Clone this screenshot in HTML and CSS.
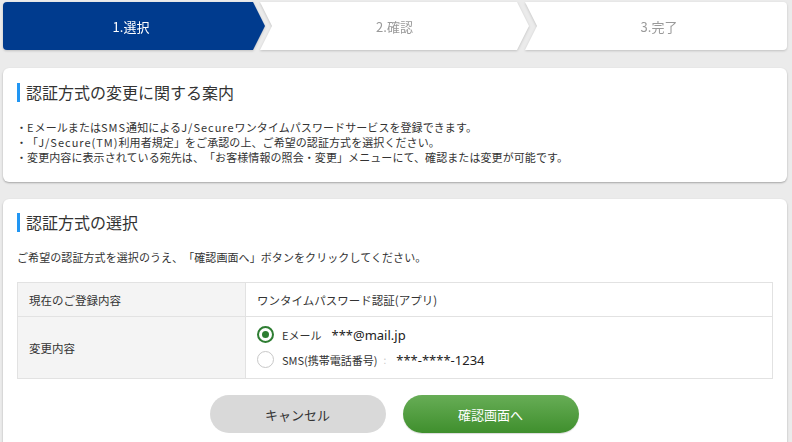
FILE: index.html
```html
<!DOCTYPE html>
<html lang="ja">
<head>
<meta charset="utf-8">
<title>認証方式の変更</title>
<link rel="stylesheet" href="styles.css">
</head>
<body>
<div class="page">
  <div class="steps">
    <div class="step step-first active">1.選択</div>
    <div class="step step-mid">2.確認</div>
    <div class="step step-last">3.完了</div>
  </div>

  <section class="card card-info">
    <h2 class="heading">認証方式の変更に関する案内</h2>
    <ul class="notes">
      <li>・<span class="en">E</span>メールまたは<span class="en">SMS</span>通知による<span class="en">J/Secure</span>ワンタイムパスワードサービスを登録できます。</li>
      <li>・「<span class="en">J/Secure(TM)</span>利用者規定」をご承認の上、ご希望の認証方式を選択ください。</li>
      <li>・変更内容に表示されている宛先は、「お客様情報の照会・変更」メニューにて、確認または変更が可能です。</li>
    </ul>
  </section>

  <section class="card card-select">
    <h2 class="heading">認証方式の選択</h2>
    <p class="desc">ご希望の認証方式を選択のうえ、「確認画面へ」ボタンをクリックしてください。</p>
    <table class="form-table">
      <tr class="row-current">
        <th>現在のご登録内容</th>
        <td>ワンタイムパスワード認証(アプリ)</td>
      </tr>
      <tr class="row-change">
        <th>変更内容</th>
        <td>
          <div class="options">
            <label class="option">
              <span class="radio checked"></span>
              <span class="opt-label">Eメール</span>
              <span class="opt-value email">***@mail.jp</span>
            </label>
            <label class="option">
              <span class="radio"></span>
              <span class="opt-label">SMS(携帯電話番号)</span>
              <span class="colon">:</span>
              <span class="opt-value phone">***-****-1234</span>
            </label>
          </div>
        </td>
      </tr>
    </table>
    <div class="buttons">
      <button class="btn btn-cancel" type="button">キャンセル</button>
      <button class="btn btn-next" type="button">確認画面へ</button>
    </div>
  </section>
</div>
</body>
</html>
```

FILE: styles.css
```css
* { box-sizing: border-box; }

html, body {
  margin: 0;
  padding: 0;
  background: #ebebeb;
}

body {
  font-family: "Noto Sans CJK JP", "Noto Sans", sans-serif;
  color: #333;
  font-size: 11px;
  text-spacing-trim: space-all;
}

.page {
  padding: 2px 5px 0 3px;
}

/* steps */
.steps {
  display: flex;
  height: 48px;
  filter: drop-shadow(0 1px 1px rgba(0, 0, 0, 0.18));
}

.step {
  display: flex;
  align-items: center;
  justify-content: center;
  height: 48px;
  background: #fff;
  color: #9a9a9a;
  font-size: 13px;
  line-height: 1;
}

.step.active {
  background: #003b8e;
  color: #fff;
}

.step-first {
  width: 262px;
  padding-left: 6px;
  padding-right: 12px;
  border-radius: 4px 0 0 4px;
  clip-path: polygon(0 0, calc(100% - 12px) 0, 100% 50%, calc(100% - 12px) 100%, 0 100%);
}

.step-mid {
  width: 269px;
  margin-left: -5px;
  padding-left: 12px;
  padding-right: 12px;
  clip-path: polygon(0 0, calc(100% - 12px) 0, 100% 50%, calc(100% - 12px) 100%, 0 100%, 12px 50%);
}

.step-last {
  flex: 1;
  margin-left: -4px;
  padding-left: 6px;
  border-radius: 0 4px 4px 0;
  clip-path: polygon(0 0, 100% 0, 100% 100%, 0 100%, 12px 50%);
}

/* cards */
.card {
  background: #fff;
  border-radius: 6px;
  box-shadow: 0 1px 2px rgba(0, 0, 0, 0.3);
}

.card-info {
  margin-top: 18px;
  height: 114px;
  padding: 15px 0 0 0;
}

.card-select {
  margin-top: 17px;
  padding: 14px 14px 20px 14px;
}

.heading {
  margin: 0;
  font-size: 16px;
  font-weight: normal;
  line-height: 19px;
  border-left: 3px solid #2196f3;
  padding-left: 6px;
  color: #333;
}

.card-info .heading {
  margin-left: 14px;
}

.notes {
  list-style: none;
  margin: 18px 0 0 0;
  padding: 0 0 0 13px;
  line-height: 15px;
  font-size: 11px;
  letter-spacing: 0.08px;
}

.notes .en {
  letter-spacing: 1px;
}

.desc {
  margin: 17px 0 0 0;
  line-height: 16px;
  font-size: 11px;
  letter-spacing: 0.08px;
}

/* table */
.form-table {
  width: 756px;
  margin-top: 17px;
  border-collapse: collapse;
  font-size: 11.5px;
}

.form-table th,
.form-table td {
  border: 1px solid #e2e2e2;
  text-align: left;
  font-weight: normal;
  padding: 0 11px;
  vertical-align: middle;
}

.form-table th {
  width: 228px;
  background: #f4f4f4;
}

.row-current th,
.row-current td {
  height: 34px;
}

.row-change td {
  padding: 5px 11px 6px 11px;
}

.options {
  display: flex;
  flex-direction: column;
}

.option {
  display: flex;
  align-items: center;
  height: 25px;
}

.radio {
  width: 17px;
  height: 17px;
  border-radius: 50%;
  border: 1.5px solid #c8c8c8;
  margin-right: 8px;
  display: flex;
  align-items: center;
  justify-content: center;
  background: #fff;
}

.radio.checked {
  border: 2px solid #2e7d32;
}

.radio.checked::after {
  content: "";
  width: 7px;
  height: 7px;
  border-radius: 50%;
  background: #2e7d32;
}

.opt-label {
  font-size: 11px;
}

.opt-value {
  font-family: "Noto Sans", "Noto Sans CJK JP", sans-serif;
  font-size: 13px;
  color: #222;
}

.email {
  margin-left: 10px;
}

.colon {
  color: #c8c8c8;
  margin-left: 6px;
  font-size: 10px;
}

.phone {
  margin-left: 10px;
}

/* buttons */
.buttons {
  display: flex;
  justify-content: center;
  gap: 17px;
  margin-top: 16px;
  padding-right: 2px;
}

.btn {
  width: 176px;
  height: 38px;
  border: none;
  border-radius: 19px;
  font-family: "Noto Sans CJK JP", sans-serif;
  font-size: 13px;
}

.btn-cancel {
  background: #d9d9d9;
  color: #333;
}

.btn-next {
  background: linear-gradient(#67ad56, #3f8f2d);
  color: #fff;
  box-shadow: 0 1px 1px rgba(0, 0, 0, 0.15);
}
```
